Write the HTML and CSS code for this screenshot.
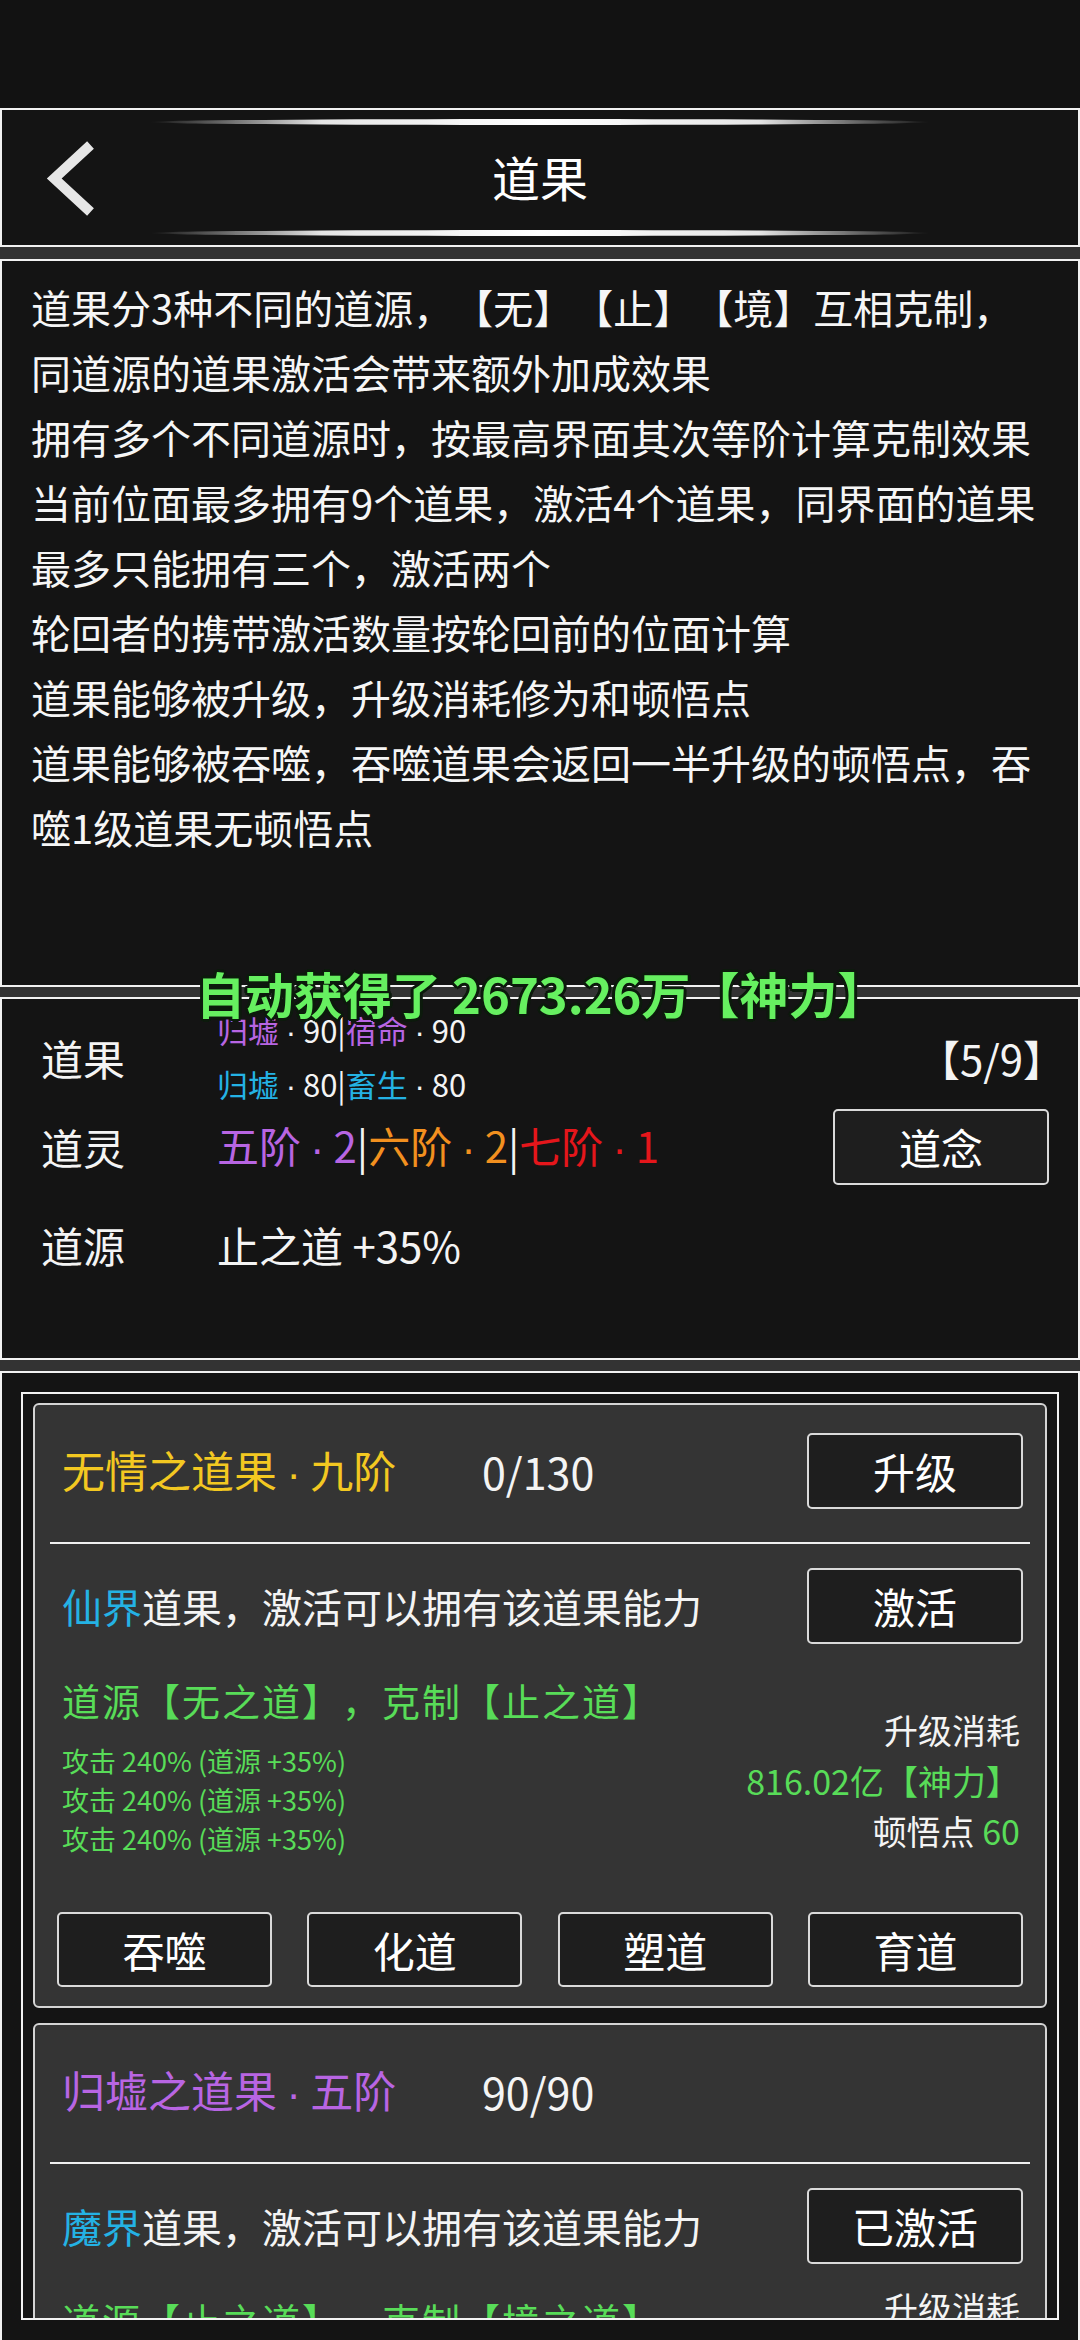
FILE: index.html
```html
<!DOCTYPE html>
<html lang="zh">
<head>
<meta charset="utf-8">
<title>道果</title>
<link rel="stylesheet" href="styles.css">
</head>
<body>
<div class="screen">
  <div class="statusbar"></div>

  <header class="panel topbar">
    <div class="glow"></div>
    <div class="bar-row">
      <svg class="back" viewBox="0 0 60 80" width="60" height="80" aria-label="返回">
        <polyline points="50.5,7 14.2,40.5 50.5,74" fill="none" stroke="#e6e6e6" stroke-width="10" stroke-linejoin="miter" stroke-linecap="butt"/>
      </svg>
      <h1 class="title">道果</h1>
      <span></span>
    </div>
    <div class="glow bottom"></div>
  </header>

  <section class="panel rules">
    <div class="line">道果分3种不同的道源，【无】【止】【境】互相克制，</div>
    <div class="line">同道源的道果激活会带来额外加成效果</div>
    <div class="line">拥有多个不同道源时，按最高界面其次等阶计算克制效果</div>
    <div class="line">当前位面最多拥有9个道果，激活4个道果，同界面的道果</div>
    <div class="line">最多只能拥有三个，激活两个</div>
    <div class="line">轮回者的携带激活数量按轮回前的位面计算</div>
    <div class="line">道果能够被升级，升级消耗修为和顿悟点</div>
    <div class="line">道果能够被吞噬，吞噬道果会返回一半升级的顿悟点，吞</div>
    <div class="line">噬1级道果无顿悟点</div>
  </section>

  <section class="panel stats">
    <div class="stat-row r1">
      <div class="label">道果</div>
      <div class="fruits">
        <div><span class="purple">归墟</span><span class="dot">·</span>90|<span class="purple">宿命</span><span class="dot">·</span>90</div>
        <div><span class="cyan">归墟</span><span class="dot">·</span>80|<span class="cyan">畜生</span><span class="dot">·</span>80</div>
      </div>
      <div class="count">【5/9】</div>
    </div>
    <div class="stat-row r2">
      <div class="label">道灵</div>
      <div class="value"><span class="purple">五阶<span class="dot">·</span>2</span>|<span class="orange">六阶<span class="dot">·</span>2</span>|<span class="red">七阶<span class="dot">·</span>1</span></div>
      <button class="btn">道念</button>
    </div>
    <div class="stat-row r3">
      <div class="label">道源</div>
      <div class="value">止之道 +35%</div>
    </div>
  </section>

  <section class="panel listpanel">
    <div class="list">
      <div class="card">
        <div class="card-head">
          <div class="fruit-name yellow">无情之道果<span class="dot">·</span>九阶</div>
          <div class="progress">0/130</div>
          <button class="btn">升级</button>
        </div>
        <div class="divider"></div>
        <div class="card-row">
          <div class="desc"><span class="cyan">仙界</span>道果，激活可以拥有该道果能力</div>
          <button class="btn">激活</button>
        </div>
        <div class="detail">
          <div class="detail-left">
            <div class="counter green">道源【无之道】，克制【止之道】</div>
            <div class="attr green">攻击 240% (道源 +35%)</div>
            <div class="attr green">攻击 240% (道源 +35%)</div>
            <div class="attr green">攻击 240% (道源 +35%)</div>
          </div>
          <div class="detail-right">
            <div>升级消耗</div>
            <div class="green">816.02亿【神力】</div>
            <div>顿悟点 <span class="green">60</span></div>
          </div>
        </div>
        <div class="actions">
          <button class="btn">吞噬</button>
          <button class="btn">化道</button>
          <button class="btn">塑道</button>
          <button class="btn">育道</button>
        </div>
      </div>

      <div class="card">
        <div class="card-head">
          <div class="fruit-name purple">归墟之道果<span class="dot">·</span>五阶</div>
          <div class="progress">90/90</div>
        </div>
        <div class="divider"></div>
        <div class="card-row">
          <div class="desc"><span class="cyan">魔界</span>道果，激活可以拥有该道果能力</div>
          <button class="btn">已激活</button>
        </div>
        <div class="detail">
          <div class="detail-left">
            <div class="counter green">道源【止之道】，克制【境之道】</div>
            <div class="attr green">攻击 200% (道源 +35%)</div>
          </div>
          <div class="detail-right short">
            <div>升级消耗</div>
            <div class="green">0【神力】</div>
            <div>顿悟点 <span class="green">0</span></div>
          </div>
        </div>
      </div>
    </div>
  </section>

  <div class="toast">自动获得了 2673.26万【神力】</div>
</div>
</body>
</html>
```

FILE: styles.css
```css
* {
  box-sizing: border-box;
  margin: 0;
  padding: 0;
}

html, body {
  width: 1080px;
  height: 2340px;
  overflow: hidden;
}

body {
  background: #333333;
  font-family: "Noto Sans CJK SC", "Noto Sans", sans-serif;
  color: #f4f4f4;
  text-spacing-trim: space-all;
}

.screen {
  position: relative;
  width: 1080px;
  height: 2340px;
}

.statusbar {
  height: 108px;
  background: #121212;
}

.panel {
  background: #141414;
  border: 2px solid #f2f2f2;
}

.dot {
  font-family: "Liberation Sans", sans-serif;
  padding: 0 0.22em;
}

/* ---------- top bar ---------- */
.topbar {
  height: 139px;
  margin-bottom: 12px;
  display: flex;
  flex-direction: column;
}

.glow {
  width: 780px;
  height: 6px;
  margin: 9px auto 0;
  border-radius: 50%;
  background: linear-gradient(90deg,
    rgba(255, 255, 255, 0) 0%,
    rgba(200, 200, 200, 0.6) 12%,
    rgba(240, 240, 240, 0.95) 22%,
    #ffffff 50%,
    rgba(240, 240, 240, 0.95) 78%,
    rgba(200, 200, 200, 0.6) 88%,
    rgba(255, 255, 255, 0) 100%);
}

.glow.bottom {
  margin: 0 auto 9px;
}

.bar-row {
  flex: 1;
  display: grid;
  grid-template-columns: 1fr auto 1fr;
  align-items: center;
}

.back {
  margin-left: 38px;
  display: block;
}

.title {
  font-size: 48px;
  font-weight: 400;
  line-height: 1;
  color: #ffffff;
  margin-top: -4px;
}

/* ---------- rules ---------- */
.rules {
  height: 728px;
  margin-bottom: 10px;
  padding: 14px 0 0 29px;
}

.line {
  font-size: 40px;
  line-height: 65px;
  white-space: nowrap;
  color: #f6f6f6;
}

/* ---------- stats ---------- */
.stats {
  height: 363px;
  margin-bottom: 11px;
  padding: 8px 29px 0 39px;
}

.stat-row {
  display: flex;
  align-items: center;
}

.stat-row.r1 { height: 102px; }
.stat-row.r2 { height: 76px; }
.stat-row.r3 { height: 60px; margin-top: 30px; }

.label {
  width: 176px;
  flex: none;
  font-size: 42px;
  line-height: 1;
}

.fruits {
  font-size: 31px;
  line-height: 51px;
  white-space: nowrap;
}

.value {
  font-size: 42px;
  line-height: 1;
  white-space: nowrap;
}

.count {
  margin-left: auto;
  margin-right: -16px;
  font-size: 42px;
  line-height: 1;
}

.stat-row .btn {
  margin-left: auto;
}

/* ---------- buttons ---------- */
.btn {
  width: 216px;
  height: 76px;
  border: 2px solid #dadada;
  border-radius: 5px;
  background: #1e1e1e;
  color: #ffffff;
  font-family: inherit;
  font-size: 42px;
  line-height: 1;
  display: flex;
  align-items: center;
  justify-content: center;
  flex: none;
}

/* ---------- list ---------- */
.listpanel {
  height: 1000px;
  padding: 19px;
}

.list {
  height: 928px;
  border: 2px solid #f2f2f2;
  padding: 9px 10px;
  overflow: hidden;
  display: flex;
  flex-direction: column;
  gap: 15px;
}

.card {
  flex: none;
  border: 2px solid #d4d4d4;
  border-radius: 6px;
  background: #343434;
  padding: 28px 22px 19px;
}

.card-head,
.card-row {
  height: 76px;
  display: flex;
  align-items: center;
}

.fruit-name {
  width: 420px;
  margin-left: 5px;
  font-size: 43px;
  line-height: 1;
  white-space: nowrap;
}

.progress {
  font-size: 43px;
  line-height: 1;
}

.card-head .btn,
.card-row .btn {
  margin-left: auto;
}

.divider {
  height: 2px;
  margin: 33px -7px 24px;
  background: #f0f0f0;
}

.desc {
  margin-left: 5px;
  font-size: 40px;
  line-height: 1;
  white-space: nowrap;
}

.detail {
  height: 268px;
  display: flex;
  justify-content: space-between;
}

.detail-left {
  padding: 31px 0 0 5px;
}

.counter {
  font-size: 38px;
  line-height: 50px;
  margin-bottom: 16px;
  letter-spacing: 2px;
  white-space: nowrap;
}

.attr {
  font-size: 27px;
  line-height: 39px;
  white-space: nowrap;
}

.detail-right {
  padding: 61px 3px 0 0;
  text-align: right;
  font-size: 34px;
  line-height: 50.5px;
  white-space: nowrap;
}

.detail-right.short {
  padding-top: 19px;
}

.actions {
  display: grid;
  grid-template-columns: repeat(4, 215px);
  justify-content: space-between;
}

.actions .btn {
  width: 215px;
  height: 75px;
}

/* ---------- colours ---------- */
.yellow { color: #f3c821; }
.purple { color: #b865e3; }
.cyan { color: #24b2e4; }
.orange { color: #f2901f; }
.red { color: #e5161b; }
.green { color: #58dc58; }

/* ---------- toast ---------- */
.toast {
  position: absolute;
  left: 196px;
  top: 965px;
  font-size: 49px;
  line-height: 56px;
  font-weight: 700;
  color: #66f060;
  white-space: nowrap;
  text-shadow:
    -3px 0 0 #0c1a0c, 3px 0 0 #0c1a0c, 0 -3px 0 #0c1a0c, 0 3px 0 #0c1a0c,
    -2px -2px 0 #0c1a0c, 2px -2px 0 #0c1a0c, -2px 2px 0 #0c1a0c, 2px 2px 0 #0c1a0c;
}
```
